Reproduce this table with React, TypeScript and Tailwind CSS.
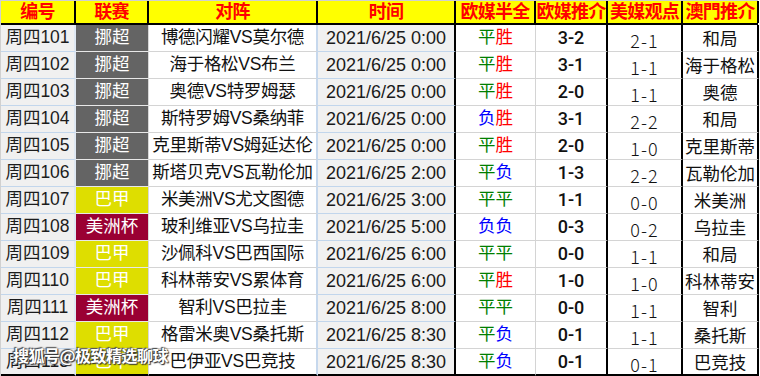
import React from "react";

type Row = {
  id: string;
  league: string;
  match: string;
  time: string;
  hf: string;
  eu: string;
  us: string;
  mo: string;
};

const rows: Row[] = [
  { id: "周四101", league: "挪超", match: "博德闪耀VS莫尔德", time: "2021/6/25 0:00", hf: "平胜", eu: "3-2", us: "2-1", mo: "和局" },
  { id: "周四102", league: "挪超", match: "海于格松VS布兰", time: "2021/6/25 0:00", hf: "平胜", eu: "3-1", us: "1-1", mo: "海于格松" },
  { id: "周四103", league: "挪超", match: "奥德VS特罗姆瑟", time: "2021/6/25 0:00", hf: "平胜", eu: "2-0", us: "1-1", mo: "奥德" },
  { id: "周四104", league: "挪超", match: "斯特罗姆VS桑纳菲", time: "2021/6/25 0:00", hf: "负胜", eu: "3-1", us: "2-2", mo: "和局" },
  { id: "周四105", league: "挪超", match: "克里斯蒂VS姆延达伦", time: "2021/6/25 0:00", hf: "平胜", eu: "2-0", us: "1-0", mo: "克里斯蒂" },
  { id: "周四106", league: "挪超", match: "斯塔贝克VS瓦勒伦加", time: "2021/6/25 2:00", hf: "平负", eu: "1-3", us: "2-2", mo: "瓦勒伦加" },
  { id: "周四107", league: "巴甲", match: "米美洲VS尤文图德", time: "2021/6/25 3:00", hf: "平平", eu: "1-1", us: "0-0", mo: "米美洲" },
  { id: "周四108", league: "美洲杯", match: "玻利维亚VS乌拉圭", time: "2021/6/25 5:00", hf: "负负", eu: "0-3", us: "0-2", mo: "乌拉圭" },
  { id: "周四109", league: "巴甲", match: "沙佩科VS巴西国际", time: "2021/6/25 6:00", hf: "平平", eu: "0-0", us: "1-1", mo: "和局" },
  { id: "周四110", league: "巴甲", match: "科林蒂安VS累体育", time: "2021/6/25 6:00", hf: "平胜", eu: "1-0", us: "1-0", mo: "科林蒂安" },
  { id: "周四111", league: "美洲杯", match: "智利VS巴拉圭", time: "2021/6/25 8:00", hf: "平平", eu: "0-0", us: "1-1", mo: "智利" },
  { id: "周四112", league: "巴甲", match: "格雷米奥VS桑托斯", time: "2021/6/25 8:30", hf: "平负", eu: "0-1", us: "1-1", mo: "桑托斯" },
  { id: "周四113", league: "巴甲", match: "巴伊亚VS巴竞技", time: "2021/6/25 8:30", hf: "平负", eu: "0-1", us: "0-1", mo: "巴竞技" },
];

function leagueBg(l: string) {
  if (l === "挪超") return "bg-[#646464]";
  if (l === "巴甲") return "bg-[#dede00]";
  return "bg-[#9a0033]";
}

function charColor(c: string) {
  if (c === "平") return "text-[#008000]";
  if (c === "胜") return "text-[#ff0000]";
  return "text-[#0000ff]";
}

const headers: { t: string; w: string }[] = [
  { t: "编号", w: "w-[75px]" },
  { t: "联赛", w: "w-[73px]" },
  { t: "对阵", w: "w-[169px]" },
  { t: "时间", w: "w-[138px]" },
  { t: "欧媒半全", w: "w-[80px]" },
  { t: "欧媒推介", w: "w-[72px]" },
  { t: "美媒观点", w: "w-[75px]" },
  { t: "澳門推介", w: "w-[76px]" },
];

export default function App() {
  const cjk = { fontFamily: '"Liberation Sans", "Noto Sans CJK SC", sans-serif' };
  return (
    <div
      className="relative w-[760px] h-[376px] overflow-hidden bg-white text-[17.5px] leading-none"
      style={cjk}
    >
      <div className="flex flex-col w-[758px] border-l border-t border-[#d0d0d0]">
        {/* header */}
        <div className="flex h-[24px] border-b-2 border-black bg-[#ffff00]">
          {headers.map((h, i) => (
            <div
              key={i}
              className={`${h.w} shrink-0 flex items-center justify-center border-r-2 border-black font-bold text-[#ff0000] text-[18px] tracking-[-0.8px] overflow-hidden whitespace-nowrap`}
            >
              {h.t}
            </div>
          ))}
        </div>
        {rows.map((r, idx) => {
          const last = idx === rows.length - 1;
          const bb = last ? "border-b-2 border-b-black" : "border-b";
          return (
            <div key={r.id} className="flex h-[27px]">
              <div className={`w-[75px] shrink-0 flex items-center justify-center bg-[#f0f0f0] text-[#1c1c1c] border-r-2 border-r-[#dfe8f3] ${bb} ${last ? "" : "border-b-[#c2d6ec]"}`}>
                {r.id}
              </div>
              <div className={`w-[73px] shrink-0 flex ${bb} ${last ? "" : "border-b-[#e8e8e8]"} border-r border-r-[#d8d8d8]`}>
                <div className={`flex-1 flex items-center justify-center text-white ${leagueBg(r.league)}`}>
                  {r.league}
                </div>
              </div>
              <div className={`w-[169px] shrink-0 flex items-center justify-center bg-white text-[#111] whitespace-nowrap tracking-[-0.3px] ${bb} ${last ? "" : "border-b-[#d4d4d4]"} border-r-2 border-r-[#c6d8ed]`}>
                {r.match}
              </div>
              <div className={`w-[138px] shrink-0 flex items-center justify-center bg-[#f1f1f1] text-[#1a1a1a] text-[18px] ${bb} ${last ? "" : "border-b-[#c2d6ec]"} border-r-2 border-r-black`}>
                {r.time}
              </div>
              <div className={`w-[80px] shrink-0 flex items-center justify-center bg-white ${bb} ${last ? "" : "border-b-[#d4d4d4]"} border-r border-r-[#d4d4d4]`}>
                {r.hf.split("").map((c, i) => (
                  <span key={i} className={charColor(c)}>
                    {c}
                  </span>
                ))}
              </div>
              <div
                className={`w-[72px] shrink-0 flex items-center justify-center bg-white font-medium text-[18px] text-[#111] ${bb} ${last ? "" : "border-b-[#d4d4d4]"} border-r-2 border-r-black`}
                style={{ fontFamily: 'Roboto, "Liberation Sans", sans-serif' }}
              >
                {r.eu}
              </div>
              <div
                className={`w-[75px] shrink-0 flex items-center justify-center pt-[4px] bg-white text-[18px] font-light text-[#111] tracking-[1px] ${bb} ${last ? "" : "border-b-[#d4d4d4]"} border-r-2 border-r-black`}
                style={{ fontFamily: '"Noto Sans CJK SC", sans-serif' }}
              >
                {r.us}
              </div>
              <div
                className={`w-[76px] shrink-0 flex items-center justify-center bg-white text-[#111] whitespace-nowrap ${bb} ${last ? "" : "border-b-[#d4d4d4]"} border-r-2 border-r-black`}
                style={{ fontFamily: '"Noto Sans CJK SC", sans-serif' }}
              >
                {r.mo}
              </div>
            </div>
          );
        })}
      </div>
      {/* watermark */}
      <div
        className="absolute left-[13px] top-[347px] text-[16px] font-bold text-white whitespace-nowrap tracking-[-0.5px]"
        style={{
          fontFamily: '"Noto Sans CJK SC", sans-serif',
          textShadow: "0 0 2px #333, 1px 1px 1px #333, -1px -1px 1px #555",
        }}
      >
        搜狐号@极致精选聊球
      </div>
    </div>
  );
}
